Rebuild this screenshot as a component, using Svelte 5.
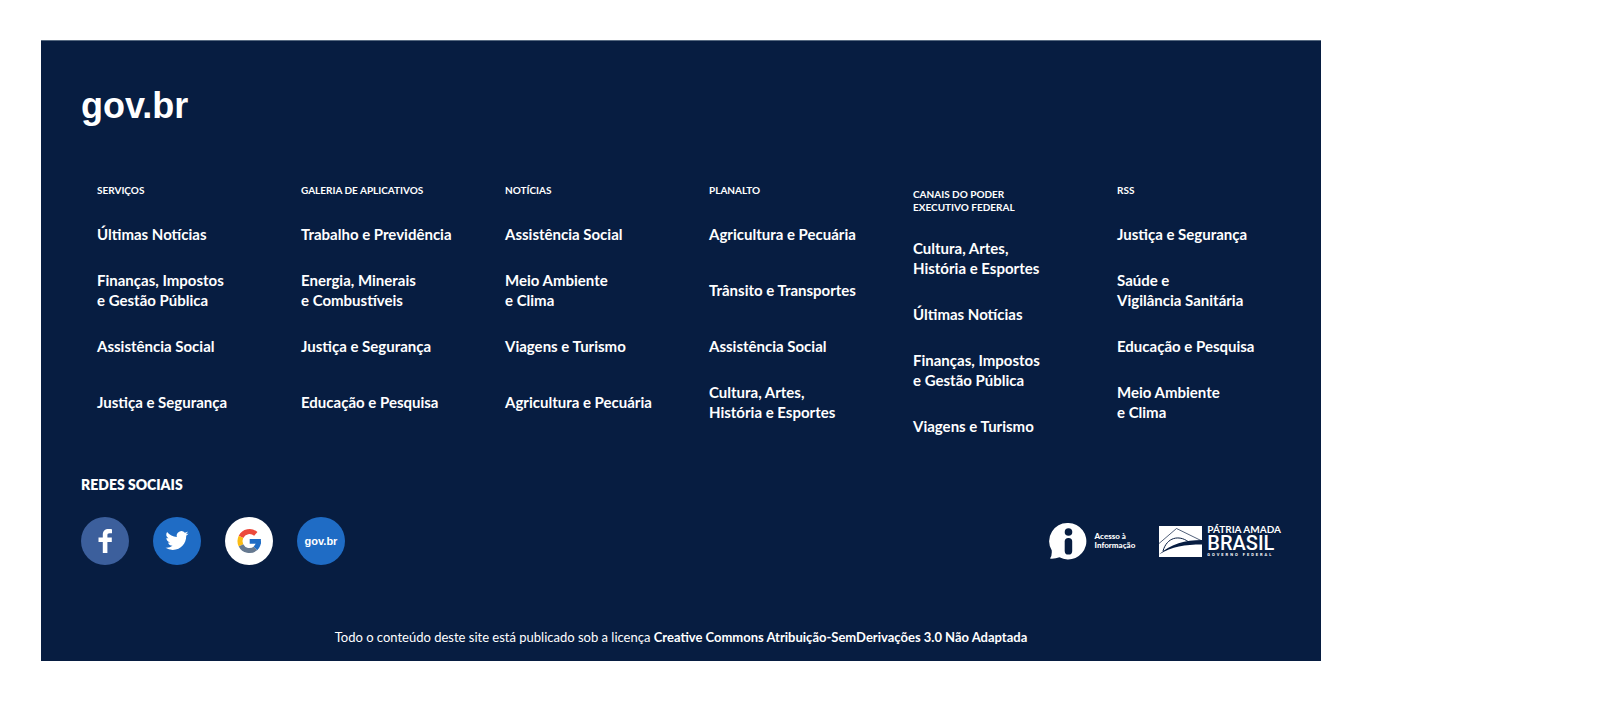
<script>
  const columns = [
    { title: ['SERVIÇOS'], links: [['Últimas Notícias'], ['Finanças, Impostos', 'e Gestão Pública'], ['Assistência Social'], ['Justiça e Segurança']] },
    { title: ['GALERIA DE APLICATIVOS'], links: [['Trabalho e Previdência'], ['Energia, Minerais', 'e Combustíveis'], ['Justiça e Segurança'], ['Educação e Pesquisa']] },
    { title: ['NOTÍCIAS'], links: [['Assistência Social'], ['Meio Ambiente', 'e Clima'], ['Viagens e Turismo'], ['Agricultura e Pecuária']] },
    { title: ['PLANALTO'], links: [['Agricultura e Pecuária'], ['Trânsito e Transportes'], ['Assistência Social'], ['Cultura, Artes,', 'História e Esportes']] },
    { title: ['CANAIS DO PODER', 'EXECUTIVO FEDERAL'], links: [['Cultura, Artes,', 'História e Esportes'], ['Últimas Notícias'], ['Finanças, Impostos', 'e Gestão Pública'], ['Viagens e Turismo']] },
    { title: ['RSS'], links: [['Justiça e Segurança'], ['Saúde e', 'Vigilância Sanitária'], ['Educação e Pesquisa'], ['Meio Ambiente', 'e Clima']] }
  ];
</script>

<footer>
  <a class="logo" href="#inicio">gov.br</a>

  <nav>
    {#each columns as column}
      <section>
        <h2 class:tall={column.title.length > 1}>
          {#each column.title as line}<span>{line}</span>{/each}
        </h2>
        <ul>
          {#each column.links as link}
            <li><a href="#link">{#each link as line}<span>{line}</span>{' '}{/each}</a></li>
          {/each}
        </ul>
      </section>
    {/each}
  </nav>

  <h3>REDES SOCIAIS</h3>
  <div class="bottom">
    <div class="social">
      <a href="#facebook" aria-label="Facebook" class="facebook">
        <svg viewBox="0 0 48 48"><path fill="#fff" d="M21.800 36V25H17.500v-4.400h4.300v-2.800c0-3.900 2.200-5.800 5.700-5.800 1.600 0 3 .1 3.500.2v4h-2.300c-1.900 0-2.300.9-2.300 2.200v2.200h4.400v4.400h-4.400V36z"/></svg>
      </a>
      <a href="#twitter" aria-label="Twitter" class="blue">
        <svg viewBox="0 0 48 48"><path fill="#fff" transform="translate(12.500 12) scale(.96)" d="M23.950 4.570a10 10 0 0 1-2.820.77 4.960 4.960 0 0 0 2.160-2.720c-.95.55-2 .95-3.120 1.180a4.920 4.920 0 0 0-8.390 4.480A13.930 13.930 0 0 1 1.640 3.160a4.920 4.920 0 0 0 1.520 6.570 4.900 4.900 0 0 1-2.230-.61v.06a4.920 4.920 0 0 0 3.950 4.820 4.900 4.900 0 0 1-2.210.08 4.940 4.940 0 0 0 4.600 3.420A9.870 9.870 0 0 1 0 19.540a13.940 13.940 0 0 0 7.550 2.210c9.050 0 14-7.500 14-13.980 0-.21 0-.42-.02-.63a9.940 9.940 0 0 0 2.460-2.550z"/></svg>
      </a>
      <a href="#google" aria-label="Google" class="google">
        <svg viewBox="0 0 48 48">
          <g transform="translate(12.500 12)" fill="none" stroke-width="5">
            <path stroke="#ec4a3c" d="M18.300 4.900A9.500 9.500 0 0 0 3.500 7.800"/>
            <path stroke="#fbbc15" d="M3.500 7.800A9.500 9.500 0 0 0 3.500 16.300"/>
            <path stroke="#667990" d="M3.500 16.300A9.500 9.500 0 0 0 18 19.400"/>
            <path stroke="#1f6cc5" d="M18 19.400A9.500 9.500 0 0 0 21 12.300"/>
            <path fill="#1f6cc5" d="M12.200 9.900h11.200v4.900H12.200z"/>
          </g>
        </svg>
      </a>
      <a href="#govbr" class="blue mini">gov.br</a>
    </div>

    <div class="seals">
      <a href="#acesso" class="info">
        <svg viewBox="0 0 38 38" width="38" height="38" aria-hidden="true">
          <path fill="#fff" d="M19.500 1A18.200 18.200 0 1 1 10.500 35.200Q6 37 1 36.600Q3.200 34 2.700 28.200A18.200 18.200 0 0 1 19.500 1z"/>
          <circle cx="19.500" cy="10" r="3.800" fill="#071d41"/>
          <rect x="15.700" y="16" width="7.500" height="16.500" rx="3.600" fill="#071d41"/>
        </svg>
        <span class="infotext"><span>Acesso à</span><span>Informação</span></span>
      </a>
      <a href="#brasil" class="brasil">
        <svg viewBox="0 0 43 31" width="43" height="31" aria-hidden="true">
          <path fill="#fff" d="M0 0h43v31H0z"/>
          <path fill="none" stroke="#071d41" stroke-width=".7" d="M0 17.500L17.500 2.500L43 15"/>
          <path fill="none" stroke="#071d41" stroke-width="1" d="M4 25C8 11 20 9 29 15.500"/>
          <path fill="#071d41" d="M0 28.500C12 18 26 14 43 14v4.500C26 18.500 13 20.500 0 28.500z"/>
        </svg>
        <span class="brasiltext"><span class="patria">PÁTRIA AMADA</span><strong>BRASIL</strong><small>GOVERNO FEDERAL</small></span>
      </a>
    </div>
  </div>

  <p>Todo o conteúdo deste site está publicado sob a licença <a href="#licenca">Creative Commons Atribuição-SemDerivações 3.0 Não Adaptada</a></p>
</footer>

<style>
  :global(body) { background: #fff; }
  footer {
    box-sizing: border-box;
    max-width: 1280px;
    margin: 40px 41px;
    padding: 40px 40px 14px;
    background: #071d41;
    border-top: 1px solid #566980;
    color: #fff;
    font-family: Lato, sans-serif;
  }
  a { color: inherit; text-decoration: none; }
  h2, h3, p, ul { margin: 0; padding: 0; }
  ul { list-style: none; }
  .logo { display: block; width: max-content; font: 700 36px/50px "Liberation Sans", Arial, sans-serif; }
  nav {
    display: grid;
    grid-template-columns: repeat(6, 1fr);
    margin: 41px -24px 0 0;
  }
  section { padding-left: 16px; }
  h2 { padding: 12px 0 9px; font-size: 10px; line-height: 13px; font-weight: 700; }
  h2.tall { padding: 16px 0; }
  h2 span, li span { display: block; white-space: nowrap; }
  li { display: flex; align-items: center; min-height: 56px; font-size: 15px; line-height: 20px; font-weight: 700; }
  h3 { margin-top: 21px; font-size: 14px; line-height: 20px; font-weight: 800; }
  .bottom { display: flex; justify-content: space-between; align-items: center; margin-top: 22px; }
  .social { display: flex; gap: 24px; }
  .social a { display: grid; place-items: center; width: 48px; height: 48px; border-radius: 50%; overflow: hidden; }
  .social svg { display: block; width: 48px; height: 48px; }
  .facebook { background: #3c5f9c; }
  .blue { background: #1f6cc5; }
  .google { background: #fff; }
  .mini { font: 700 11px/16px "Liberation Sans", Arial, sans-serif; }
  .seals, .info, .brasil { display: flex; align-items: center; }
  .seals { gap: 24px; }
  .info { gap: 8px; }
  .infotext { font: 900 8px/9px Lato, sans-serif; }
  .infotext span, .brasiltext > * { display: block; white-space: nowrap; }
  .brasil { gap: 5px; }
  .patria { font: 700 10px/10px Lato, sans-serif; }
  strong { font: 500 20px/18px Roboto, sans-serif; }
  small { font: 700 4px/6px Roboto, sans-serif; letter-spacing: 2px; margin-right: -2px; }
  p { margin-top: 62px; text-align: center; font-size: 13px; line-height: 20px; }
  p a { font-weight: 700; }
</style>
